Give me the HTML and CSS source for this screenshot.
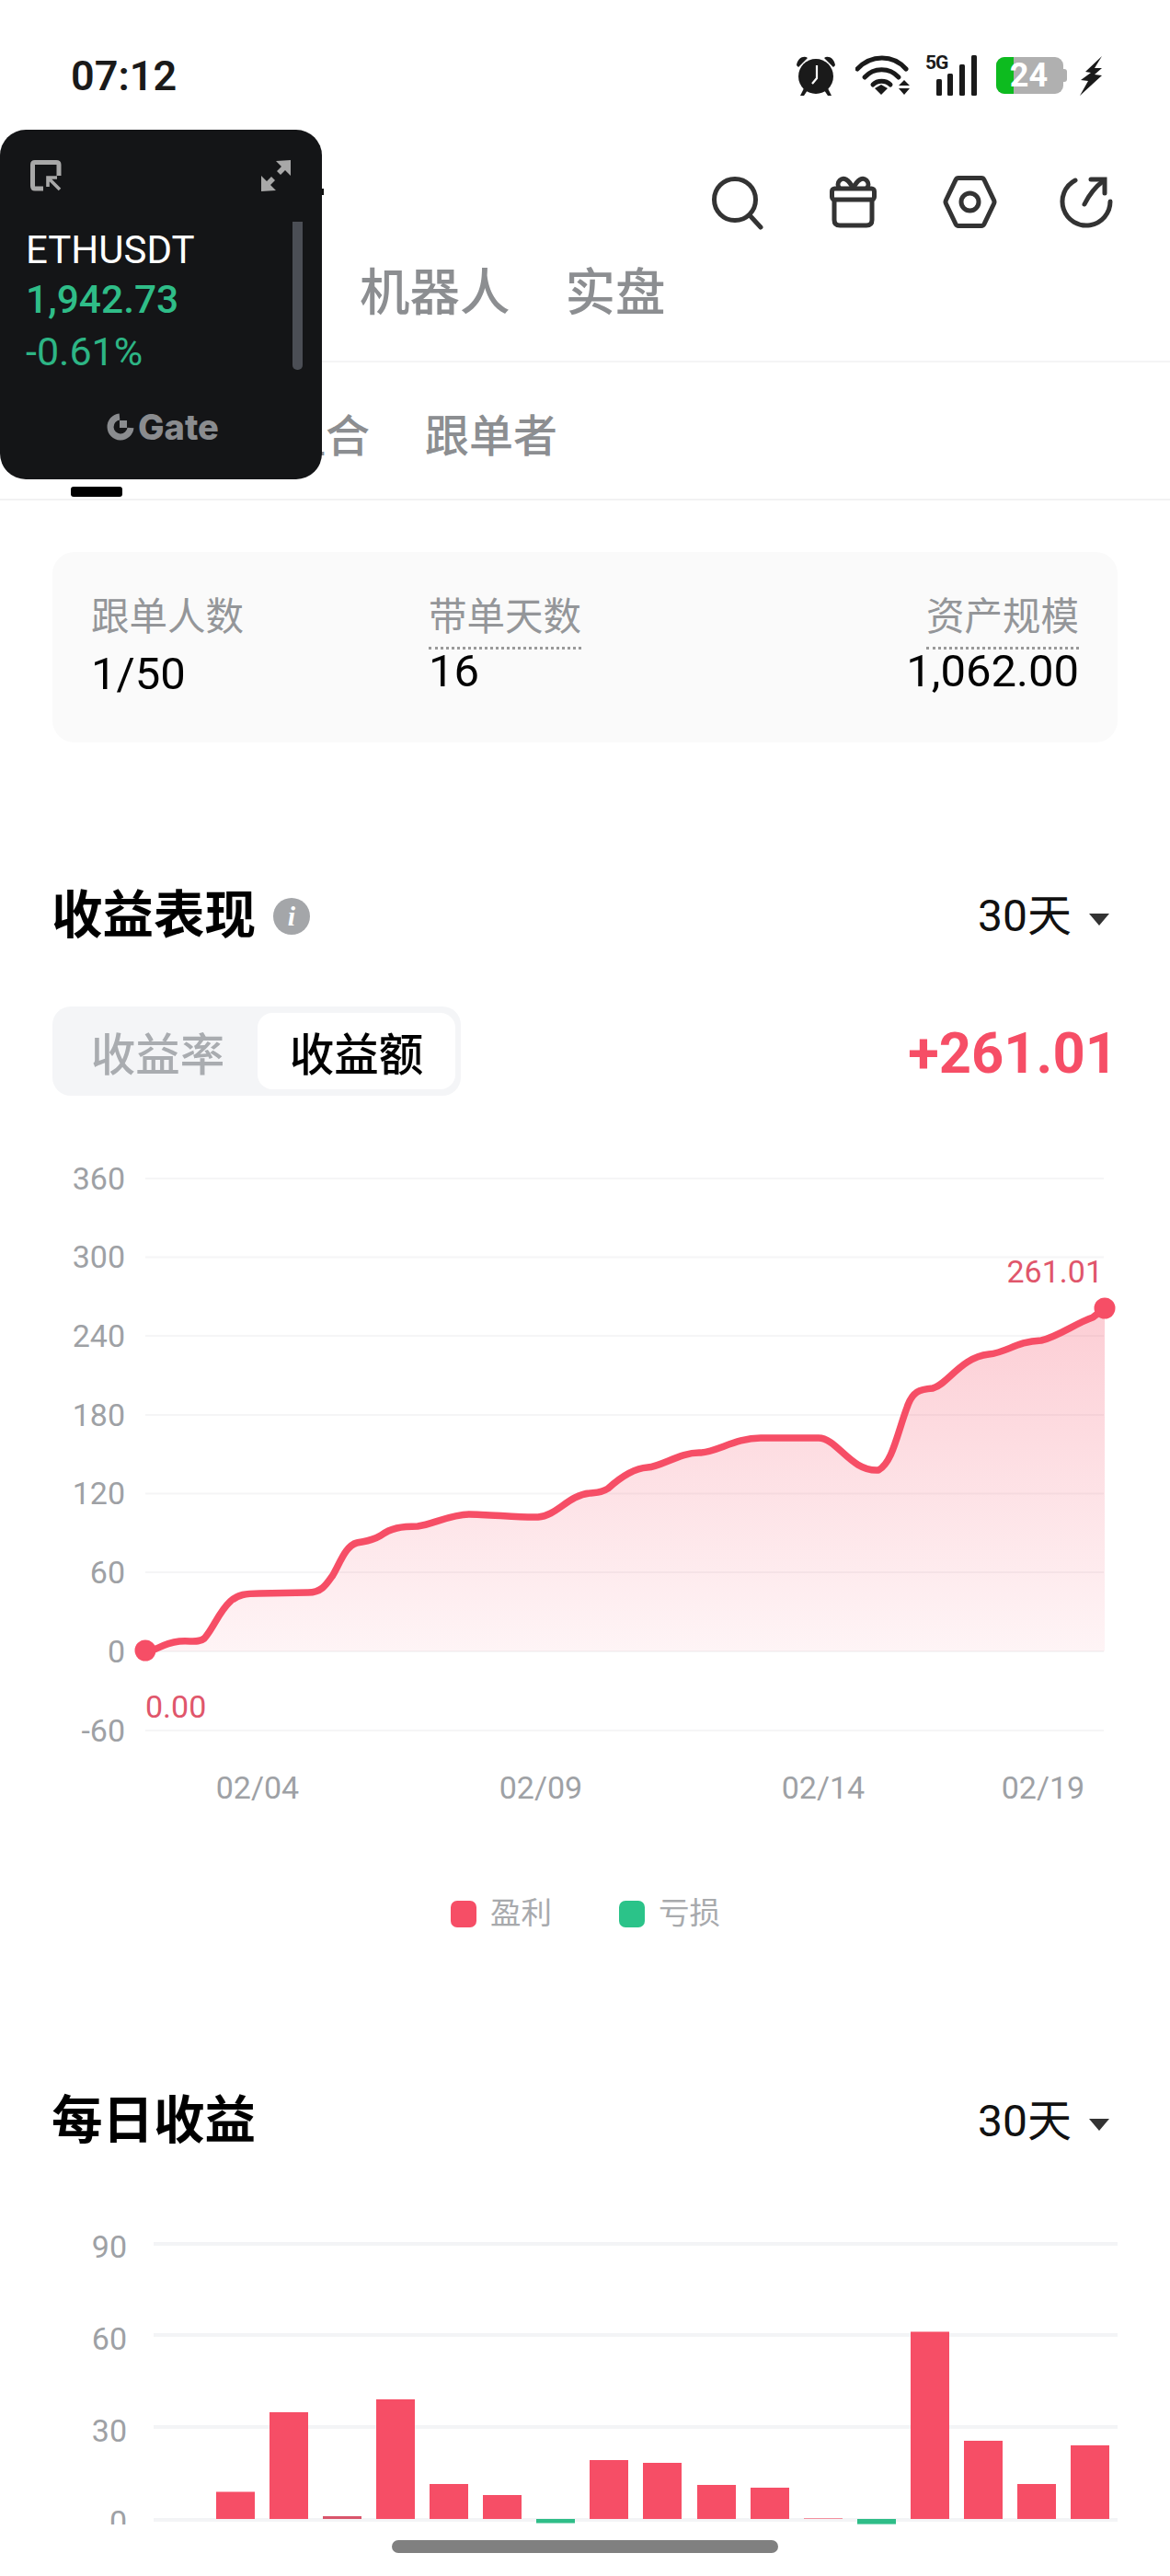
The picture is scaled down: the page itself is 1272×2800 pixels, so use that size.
FILE: index.html
```html
<!DOCTYPE html>
<html lang="en">
<head>
  <meta charset="UTF-8" />
  <meta name="viewport" content="width=device-width, initial-scale=1.0" />
  <title>Copy trading</title>
  <link rel="stylesheet" href="styles.css">
</head>
<body>
  <div class="page">
    <div class="status">
      <span class="time">07:12</span>
      <div class="status-icons">
        <svg class="ic-alarm" width="44" height="44" viewBox="0 0 44 44">
          <path d="M1 11 C2 3 9 0 13 3 L3 13 Z M43 11 C42 3 35 0 31 3 L41 13 Z" fill="#1a1a1a"/>
          <path d="M9 36 L5 44 L9 44 L13 38 Z M35 36 L39 44 L35 44 L31 38 Z" fill="#1a1a1a"/>
          <circle cx="22" cy="23" r="19" fill="#1a1a1a"/>
          <path d="M23 11 V25 L18 31" fill="none" stroke="#fff" stroke-width="2.2"/>
        </svg>
        <svg class="ic-wifi" width="60" height="44" viewBox="0 0 60 44">
          <g fill="none" stroke="#1a1a1a" stroke-width="5" stroke-linecap="round">
            <path d="M2 15 C17 -1 41 -1 55 15"/>
            <path d="M10 24 C20 13 37 13 47 24"/>
            <path d="M19 32 C24 27 33 27 38 32"/>
          </g>
          <path d="M21 36 L28 32 L35 36 L28 43 Z" fill="#1a1a1a"/>
          <path d="M47 33 L53 27 L59 33 Z M47 36 H59 L53 43 Z" fill="#1a1a1a"/>
        </svg>
        <div class="signal">
          <span class="five-g">5G</span>
          <svg width="44" height="44" viewBox="0 0 44 44">
            <rect x="0" y="26" width="6" height="18" rx="1.5" fill="#1a1a1a"/>
            <rect x="12" y="20" width="6" height="24" rx="1.5" fill="#1a1a1a"/>
            <rect x="25" y="10" width="6" height="34" rx="1.5" fill="#1a1a1a"/>
            <rect x="38" y="0" width="6" height="44" rx="1.5" fill="#1a1a1a"/>
          </svg>
        </div>
        <div class="battery"><span class="battery-fill"></span><span class="battery-num">24</span></div>
        <svg class="ic-bolt" width="25" height="43" viewBox="0 0 25 43">
          <path d="M24 0 L6 17 L12 18 L1 26 L9 27 L0 43 L24 21 L16 20 L24 13 L16 13 Z" fill="#1a1a1a"/>
        </svg>
      </div>
    </div>

    <div class="float-card">
      <div class="float-top">
        <svg width="34" height="34" viewBox="0 0 34 34" fill="none" stroke="#a8a8a8" stroke-width="5">
          <path d="M14 31 H5 Q2.5 31 2.5 28 V5 Q2.5 2.5 5 2.5 H28 Q31 2.5 31 5 V17"/>
          <path d="M32 32 L20 20 M19 29 V19 H29" stroke-width="3.6"/>
        </svg>
        <svg width="34" height="34" viewBox="0 0 34 34" fill="#a8a8a8">
          <path d="M33 0 V17 L27 11 L22 16 L18 12 L23 7 L17 1 Z"/>
          <path d="M1 34 V17 L7 23 L12 18 L16 22 L11 27 L17 33 Z"/>
        </svg>
      </div>
      <div class="float-scroll"></div>
      <div class="float-symbol">ETHUSDT</div>
      <div class="float-price">1,942.73</div>
      <div class="float-change">-0.61%</div>
      <div class="float-logo">
        <svg width="30" height="30" viewBox="0 0 30 30">
          <path d="M14 4 A11 11 0 1 0 26 16" fill="none" stroke="#8a8c8f" stroke-width="7"/>
          <rect x="14" y="8" width="8" height="8" fill="#8a8c8f"/>
        </svg>
        <span>Gate</span>
      </div>
    </div>

    <div class="actions">
      <span class="title-tail"></span>
      <svg width="60" height="60" viewBox="0 0 60 60" fill="none" stroke="#333" stroke-width="5" stroke-linecap="round">
        <circle cx="29" cy="27" r="22.5"/>
        <path d="M45 44 L57 57"/>
      </svg>
      <svg width="60" height="60" viewBox="0 0 60 60" fill="none" stroke="#333" stroke-width="5" stroke-linejoin="round">
        <rect x="7.5" y="15" width="46" height="12" rx="3"/>
        <path d="M10 27 V49 Q10 55 16 55 H45 Q51 55 51 49 V27"/>
        <path d="M30.5 15 C26 5 20 2 16 6 C13 9 14 13 16 15 M30.5 15 C35 5 41 2 45 6 C48 9 47 13 45 15"/>
      </svg>
      <svg width="60" height="60" viewBox="0 0 60 60" fill="none" stroke="#333" stroke-width="5" stroke-linejoin="round">
        <path d="M18 3.5 H43 Q45 3.5 46 5.5 L56.5 27.5 Q57.5 29.5 56.5 31.5 L46 53.5 Q45 55.5 43 55.5 H18 Q16 55.5 15 53.5 L4.5 31.5 Q3.5 29.5 4.5 27.5 L15 5.5 Q16 3.5 18 3.5 Z"/>
        <circle cx="30.5" cy="29.5" r="9.5"/>
      </svg>
      <svg width="60" height="60" viewBox="0 0 60 60" fill="none" stroke="#333" stroke-width="5" stroke-linecap="round">
        <path d="M18 6 A26 26 0 1 0 56 29"/>
        <path d="M28 32 C33 22 40 13 48 7"/>
        <path d="M35 5 H50 V20"/>
      </svg>
    </div>

    <div class="tabs">
      <span class="tab">机器人</span>
      <span class="tab">实盘</span>
    </div>

    <div class="subtabs">
      <span class="subtab active">数据</span>
      <span class="subtab group">组合</span>
      <span class="subtab">跟单者</span>
    </div>

    <div class="stats">
      <div class="stat">
        <span class="stat-label">跟单人数</span>
        <span class="stat-value low">1/50</span>
      </div>
      <div class="stat">
        <span class="stat-label dotted">带单天数</span>
        <span class="stat-value">16</span>
      </div>
      <div class="stat right">
        <span class="stat-label dotted">资产规模</span>
        <span class="stat-value">1,062.00</span>
      </div>
    </div>

    <div class="section-head first">
      <div class="section-title">
        收益表现
        <svg width="40" height="40" viewBox="0 0 40 40">
          <circle cx="20" cy="20" r="20" fill="#a4a6a9"/>
          <text x="20" y="30" class="info-i">i</text>
        </svg>
      </div>
      <div class="range">30天<span class="caret"></span></div>
    </div>

    <div class="profit-row">
      <div class="seg">
        <span class="seg-item">收益率</span>
        <span class="seg-item on">收益额</span>
      </div>
      <span class="profit">+261.01</span>
    </div>

    <svg class="chart" width="1272" height="809" viewBox="0 1191 1272 809">
      <defs>
        <linearGradient id="areaFill" x1="0" y1="0" x2="0" y2="1">
          <stop offset="0" stop-color="#f54d66" stop-opacity="0.28"/>
          <stop offset="1" stop-color="#f54d66" stop-opacity="0.06"/>
        </linearGradient>
      </defs>
      <g class="grid">
        <path d="M158 1281 H1200 M158 1366.5 H1200 M158 1452 H1200 M158 1538 H1200 M158 1623.5 H1200 M158 1709 H1200 M158 1795 H1200 M158 1881 H1200"/>
      </g>
      <path fill="url(#areaFill)" d="M158 1795 L170 1792 C180 1787 186 1785 195 1784 C208 1783 216 1786 222 1781 C232 1770 238 1752 250 1741 C258 1733 268 1732 282 1732 L335 1731 C350 1731 355 1722 362 1712 C370 1698 376 1680 388 1677 C398 1675 404 1675 414 1669 C425 1661 436 1659 454 1659 C470 1657 490 1646 510 1646 C530 1646 570 1650 585 1649 C605 1648 618 1625 641 1623 C650 1622 655 1622 661 1618 C672 1608 688 1596 704 1595 C720 1594 740 1578 762 1579 C780 1578 800 1563 827 1563 L890 1563 C910 1563 925 1600 955 1598 C970 1590 975 1560 986 1530 C992 1512 1000 1510 1014 1509 C1030 1505 1045 1475 1075 1472 C1095 1470 1105 1458 1132 1457 C1150 1453 1170 1438 1188 1432 L1201 1422 V1795 Z"/>
      <path class="line" d="M158 1795 L170 1792 C180 1787 186 1785 195 1784 C208 1783 216 1786 222 1781 C232 1770 238 1752 250 1741 C258 1733 268 1732 282 1732 L335 1731 C350 1731 355 1722 362 1712 C370 1698 376 1680 388 1677 C398 1675 404 1675 414 1669 C425 1661 436 1659 454 1659 C470 1657 490 1646 510 1646 C530 1646 570 1650 585 1649 C605 1648 618 1625 641 1623 C650 1622 655 1622 661 1618 C672 1608 688 1596 704 1595 C720 1594 740 1578 762 1579 C780 1578 800 1563 827 1563 L890 1563 C910 1563 925 1600 955 1598 C970 1590 975 1560 986 1530 C992 1512 1000 1510 1014 1509 C1030 1505 1045 1475 1075 1472 C1095 1470 1105 1458 1132 1457 C1150 1453 1170 1438 1188 1432 L1201 1422"/>
      <circle cx="158" cy="1794" r="11.5" class="dot"/>
      <circle cx="1201" cy="1422" r="11.5" class="dot"/>
      <g class="axis">
        <text x="136" y="1293">360</text>
        <text x="136" y="1378">300</text>
        <text x="136" y="1464">240</text>
        <text x="136" y="1550">180</text>
        <text x="136" y="1635">120</text>
        <text x="136" y="1721">60</text>
        <text x="136" y="1807">0</text>
        <text x="136" y="1893">-60</text>
      </g>
      <g class="axis-x">
        <text x="280" y="1955">02/04</text>
        <text x="588" y="1955">02/09</text>
        <text x="895" y="1955">02/14</text>
        <text x="1134" y="1955">02/19</text>
      </g>
      <text x="1199" y="1394" class="val end">261.01</text>
      <text x="158" y="1867" class="val">0.00</text>
    </svg>

    <div class="legend">
      <span class="legend-item"><i class="swatch red"></i>盈利</span>
      <span class="legend-item"><i class="swatch green"></i>亏损</span>
    </div>

    <div class="section-head second">
      <div class="section-title">每日收益</div>
      <div class="range">30天<span class="caret"></span></div>
    </div>

    <svg class="chart" width="1272" height="406" viewBox="0 2338 1272 406">
      <g class="grid thick">
        <path d="M167 2439 H1215 M167 2538 H1215 M167 2638 H1215 M167 2739 H1215"/>
      </g>
      <g class="axis">
        <text x="138" y="2454">90</text>
        <text x="138" y="2554">60</text>
        <text x="138" y="2654">30</text>
        <text x="138" y="2753">0</text>
      </g>
      <g class="bars">
        <rect x="235" y="2708.5" width="42" height="29.5"/>
        <rect x="293" y="2622" width="42" height="116"/>
        <rect x="351" y="2735" width="42" height="3" class="dim"/>
        <rect x="409" y="2608" width="42" height="130"/>
        <rect x="467" y="2700" width="42" height="38"/>
        <rect x="525" y="2712" width="42" height="26"/>
        <rect x="583" y="2738" width="42" height="4.5" class="loss"/>
        <rect x="641" y="2674" width="42" height="64"/>
        <rect x="699" y="2677" width="42" height="61"/>
        <rect x="758" y="2701" width="42" height="37"/>
        <rect x="816" y="2704" width="42" height="34"/>
        <rect x="874" y="2737.4" width="42" height="0.6"/>
        <rect x="932" y="2738" width="42" height="5.6" class="loss"/>
        <rect x="990" y="2534.5" width="42" height="203.5"/>
        <rect x="1048" y="2653" width="42" height="85"/>
        <rect x="1106" y="2700" width="42" height="38"/>
        <rect x="1164" y="2658" width="42" height="80"/>
      </g>
    </svg>
  </div>

  <div class="home-area"><span class="home-bar"></span></div>
</body>
</html>
```

FILE: styles.css
```css
:root {
  --red: #f64e66;
  --green: #2fbd88;
  --muted: #8c8e91;
  --axis: #9ea1a5;
}

* {
  box-sizing: border-box;
}

body {
  margin: 0;
  width: 1272px;
  height: 2800px;
  overflow: hidden;
  background: #fff;
  color: #000;
  font-family: Roboto, "Noto Sans CJK SC", sans-serif;
}

.page {
  position: relative;
  height: 2744px;
  overflow: hidden;
}

/* status bar */
.status {
  height: 164px;
  padding: 0 73px 0 77px;
  display: flex;
  align-items: center;
  justify-content: space-between;
}

.time {
  font-size: 45px;
  font-weight: 600;
  color: #1a1a1a;
}

.status-icons {
  display: flex;
  align-items: center;
}

.ic-wifi {
  margin-left: 21px;
}

.signal {
  position: relative;
  width: 56px;
  height: 44px;
  margin-left: 16px;
  display: flex;
  justify-content: flex-end;
}

.five-g {
  position: absolute;
  left: 0;
  top: -3px;
  font-size: 21px;
  line-height: 22px;
  font-weight: 700;
  letter-spacing: -1px;
  color: #1a1a1a;
}

.battery {
  position: relative;
  width: 73px;
  height: 40px;
  margin: 0 4px 0 21px;
  border-radius: 9px;
  background: #b0b0b0;
  text-align: center;
}

.battery::after {
  content: '';
  position: absolute;
  right: -4px;
  top: 13px;
  width: 4px;
  height: 14px;
  border-radius: 0 3px 3px 0;
  background: #b0b0b0;
}

.battery-fill {
  position: absolute;
  left: 0;
  top: 0;
  bottom: 0;
  width: 19px;
  border-radius: 9px 0 0 9px;
  background: #0dbb1f;
}

.battery-num {
  position: relative;
  font-size: 36px;
  line-height: 40px;
  font-weight: 700;
  color: #fff;
  margin-right: 2px;
}

.ic-bolt {
  margin-left: 14px;
}

/* floating price window */
.float-card {
  position: absolute;
  left: 0;
  top: 141px;
  z-index: 5;
  width: 350px;
  height: 380px;
  background: #141517;
  border-radius: 28px;
  padding: 33px 33px 0 28px;
}

.float-top {
  display: flex;
  justify-content: space-between;
  padding: 0 0 0 5px;
}

.float-scroll {
  position: absolute;
  left: 318px;
  top: 100px;
  width: 11px;
  height: 161px;
  background: #4b4e55;
  border-radius: 0 0 5px 5px;
}

.float-symbol {
  margin-top: 40px;
  font-size: 42px;
  line-height: 48px;
  color: #fff;
}

.float-price {
  margin-top: 6px;
  font-size: 42.5px;
  line-height: 48px;
  font-weight: 500;
  color: var(--green);
}

.float-change {
  margin-top: 8px;
  font-size: 43px;
  line-height: 48px;
  color: #2db585;
}

.float-logo {
  margin-top: 38px;
  padding-left: 88px;
  display: flex;
  align-items: center;
  gap: 4px;
  color: #8a8c8f;
  font-family: Inter, sans-serif;
  font-size: 38px;
  line-height: 40px;
  font-weight: 800;
}

/* header */
.actions {
  position: relative;
  padding: 26px 61px 0 0;
  height: 86px;
  display: flex;
  justify-content: flex-end;
  gap: 67px;
}

.title-tail {
  position: absolute;
  left: 348px;
  top: 41px;
  width: 4px;
  height: 7px;
  background: #111;
}

.tabs {
  height: 144px;
  padding: 40px 0 0 391px;
  display: flex;
  gap: 60px;
  border-bottom: 2px solid #f4f4f5;
}

.tab {
  font-size: 54.5px;
  line-height: 56px;
  font-weight: 500;
  color: var(--muted);
}

.subtabs {
  height: 150px;
  padding: 53px 0 0 57px;
  display: flex;
  gap: 60px;
  border-bottom: 2px solid #f2f2f3;
}

.subtab {
  font-size: 48px;
  line-height: 56px;
  font-weight: 500;
  color: var(--muted);
}

.subtab.group {
  margin-left: 93px;
}

.subtab.active {
  width: 96px;
}

.subtab.active::after {
  content: '';
  display: block;
  width: 56px;
  height: 11px;
  margin: 26px 0 0 20px;
  border-radius: 3px;
  background: #000;
}

/* stats card */
.stats {
  margin: 56px 57px 0;
  height: 207px;
  padding: 47px 42px 0;
  border-radius: 24px;
  background: #fafafa;
  display: grid;
  grid-template-columns: 367px 1fr auto;
}

.stat {
  display: flex;
  flex-direction: column;
  align-items: flex-start;
}

.stat.right {
  align-items: flex-end;
}

.stat-label {
  font-size: 41.5px;
  line-height: 48px;
  padding-bottom: 8px;
  border-bottom: 3px dotted transparent;
  color: #949699;
}

.stat-label.dotted {
  border-bottom-color: #9a9a9a;
}

.stat-value {
  font-size: 49px;
  line-height: 48px;
  color: #000;
}

.stat-value.low {
  margin-top: 3px;
}

/* section heads */
.section-head {
  padding: 0 66px 0 56px;
  height: 64px;
  display: flex;
  align-items: center;
  justify-content: space-between;
}

.section-head.first {
  margin-top: 157px;
}

.section-head.second {
  margin-top: 177px;
}

.section-title {
  display: flex;
  align-items: center;
  gap: 19px;
  font-size: 55.5px;
  font-weight: 700;
  line-height: 64px;
}

.info-i {
  font-family: "Liberation Serif", serif;
  font-style: italic;
  font-weight: 700;
  font-size: 30px;
  text-anchor: middle;
  fill: #fff;
}

.range {
  display: flex;
  align-items: center;
  font-size: 48px;
  line-height: 64px;
  color: #111;
}

.caret {
  width: 0;
  height: 0;
  margin-left: 19px;
  margin-top: 6px;
  border-left: 11px solid transparent;
  border-right: 11px solid transparent;
  border-top: 13px solid #333;
}

/* segmented switch */
.profit-row {
  margin-top: 66px;
  padding: 0 57px 0 57px;
  height: 97px;
  display: flex;
  align-items: center;
  justify-content: space-between;
}

.seg {
  width: 444px;
  height: 97px;
  padding: 7px 6px;
  border-radius: 20px;
  background: #f4f5f7;
  display: grid;
  grid-template-columns: 217px 215px;
}

.seg-item {
  display: flex;
  align-items: center;
  justify-content: center;
  border-radius: 16px;
  font-size: 48.5px;
  font-weight: 500;
  color: #a9acb0;
}

.seg-item.on {
  background: #fff;
  color: #000;
}

.profit {
  font-size: 61.5px;
  line-height: 74px;
  padding-top: 4px;
  font-weight: 700;
  color: var(--red);
}

/* charts */
.chart {
  display: block;
}

.grid path {
  fill: none;
  stroke: #f5f5f6;
  stroke-width: 2;
}

.grid.thick path {
  stroke: #f3f4f6;
  stroke-width: 4;
}

.line {
  fill: none;
  stroke: var(--red);
  stroke-width: 7.5;
  stroke-linecap: round;
  stroke-linejoin: round;
}

.dot {
  fill: var(--red);
}

.axis text {
  font-size: 34px;
  fill: var(--axis);
  text-anchor: end;
}

.axis-x text {
  font-size: 34px;
  fill: var(--axis);
  text-anchor: middle;
}

.val {
  font-size: 34px;
  fill: #e0566b;
}

.val.end {
  text-anchor: end;
}

.bars rect {
  fill: var(--red);
}

.bars rect.loss {
  fill: var(--green);
}

.bars rect.dim {
  fill: #d9556b;
}

/* legend */
.legend {
  margin-top: 63px;
  height: 34px;
  padding-left: 490px;
  display: flex;
  gap: 73px;
}

.legend-item {
  display: flex;
  align-items: center;
  gap: 15px;
  font-size: 33.5px;
  line-height: 34px;
  color: #a8aaad;
}

.swatch {
  width: 28px;
  height: 29px;
  border-radius: 7px;
}

.swatch.red {
  background: var(--red);
}

.swatch.green {
  background: #2bc389;
}

.home-area {
  height: 56px;
  display: flex;
  justify-content: center;
  padding-top: 17px;
}

.home-bar {
  width: 420px;
  height: 14px;
  border-radius: 7px;
  background: #808080;
}
```
